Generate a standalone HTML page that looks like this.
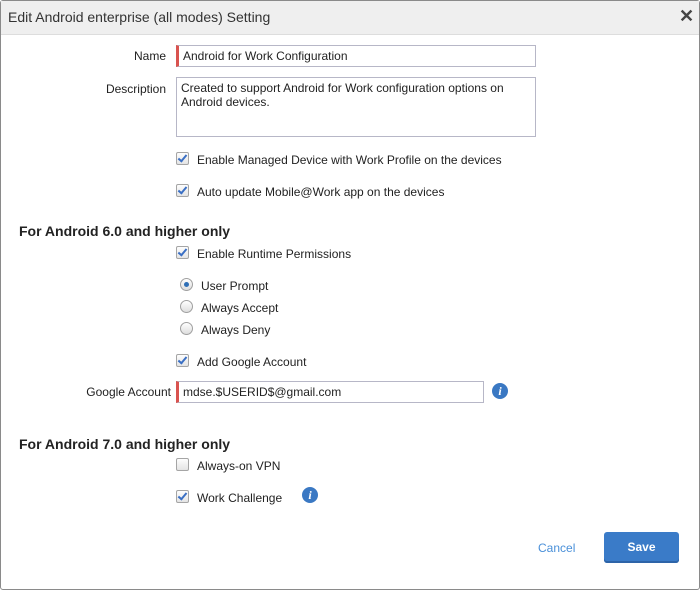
<!DOCTYPE html>
<html><head><style>
body{margin:0;width:700px;height:590px;background:#fff;font-family:"Liberation Sans",Arial,sans-serif;font-size:12px;color:#222;position:relative;overflow:hidden}
.dlg{position:absolute;left:0;top:0;width:698px;height:588px;border:1px solid #8a8a8a;border-radius:3px}
.hdr{position:absolute;left:1px;top:1px;width:698px;height:33px;background:#efefef;border-bottom:1px solid #ddd}
.a{position:absolute;white-space:nowrap}
.inp{position:absolute;border:1px solid #b7b7c7;border-left:3px solid #d9534f;box-sizing:border-box;background:#fff;padding:3px 4px;font-size:12px}
.cb{position:absolute;width:11px;height:11px;border:1px solid #a5a5a5;border-radius:2px;background:linear-gradient(#fdfdfd,#e4e4e4)}
.cb.c::after{content:"";position:absolute;left:3px;top:0px;width:3px;height:7px;border:solid #3a6fc4;border-width:0 2px 2px 0;transform:rotate(40deg)}
.rd{position:absolute;width:11px;height:11px;border:1px solid #a0a0a0;border-radius:50%;background:linear-gradient(#fff,#ddd)}
.rd.c::after{content:"";position:absolute;left:3px;top:3px;width:5px;height:5px;border-radius:50%;background:#2f6fb6}
.lbl{text-align:right;width:100px}
.h{font-weight:bold;font-size:14px}
.info{position:absolute;width:16px;height:16px;border-radius:50%;background:#3a78c3;color:#fff;font:italic bold 12px "Liberation Serif",serif;text-align:center;line-height:16px}
</style></head><body>
<div class="dlg"></div>
<div class="hdr"></div>
<div class="a" style="left:8px;top:9px;font-size:14px;color:#333">Edit Android enterprise (all modes) Setting</div>
<div class="a" style="left:679px;top:6px;font-size:18px;font-weight:bold;color:#444">✕</div>

<div class="a lbl" style="left:66px;top:49px">Name</div>
<div class="inp" style="left:176px;top:45px;width:360px;height:22px">Android for Work Configuration</div>
<div class="a lbl" style="left:66px;top:82px">Description</div>
<div class="inp" style="left:176px;top:77px;width:360px;height:60px;border-left:1px solid #b7b7c7;line-height:14px">Created to support Android for Work configuration options on<br>Android devices.</div>

<div class="cb c" style="left:176px;top:152px"></div><div class="a" style="left:197px;top:153px">Enable Managed Device with Work Profile on the devices</div>
<div class="cb c" style="left:176px;top:184px"></div><div class="a" style="left:197px;top:185px">Auto update Mobile@Work app on the devices</div>

<div class="a h" style="left:19px;top:223px">For Android 6.0 and higher only</div>
<div class="cb c" style="left:176px;top:246px"></div><div class="a" style="left:197px;top:247px">Enable Runtime Permissions</div>
<div class="rd c" style="left:180px;top:278px"></div><div class="a" style="left:201px;top:279px">User Prompt</div>
<div class="rd" style="left:180px;top:300px"></div><div class="a" style="left:201px;top:301px">Always Accept</div>
<div class="rd" style="left:180px;top:322px"></div><div class="a" style="left:201px;top:323px">Always Deny</div>
<div class="cb c" style="left:176px;top:354px"></div><div class="a" style="left:197px;top:355px">Add Google Account</div>
<div class="a lbl" style="left:71px;top:385px">Google Account</div>
<div class="inp" style="left:176px;top:381px;width:308px;height:22px">mdse.$USERID$@gmail.com</div>
<div class="info" style="left:492px;top:383px">i</div>

<div class="a h" style="left:19px;top:436px">For Android 7.0 and higher only</div>
<div class="cb" style="left:176px;top:458px"></div><div class="a" style="left:197px;top:459px">Always-on VPN</div>
<div class="cb c" style="left:176px;top:490px"></div><div class="a" style="left:197px;top:491px">Work Challenge</div>
<div class="info" style="left:302px;top:487px">i</div>

<div class="a" style="left:538px;top:541px;color:#4a90d9">Cancel</div>
<div class="a" style="left:604px;top:532px;width:75px;height:31px;background:#3a7bc8;border-radius:3px;box-shadow:inset 0 -2px 0 #2d64a8;color:#fff;font-size:12px;font-weight:bold;text-align:center;line-height:31px">Save</div>
</body></html>
